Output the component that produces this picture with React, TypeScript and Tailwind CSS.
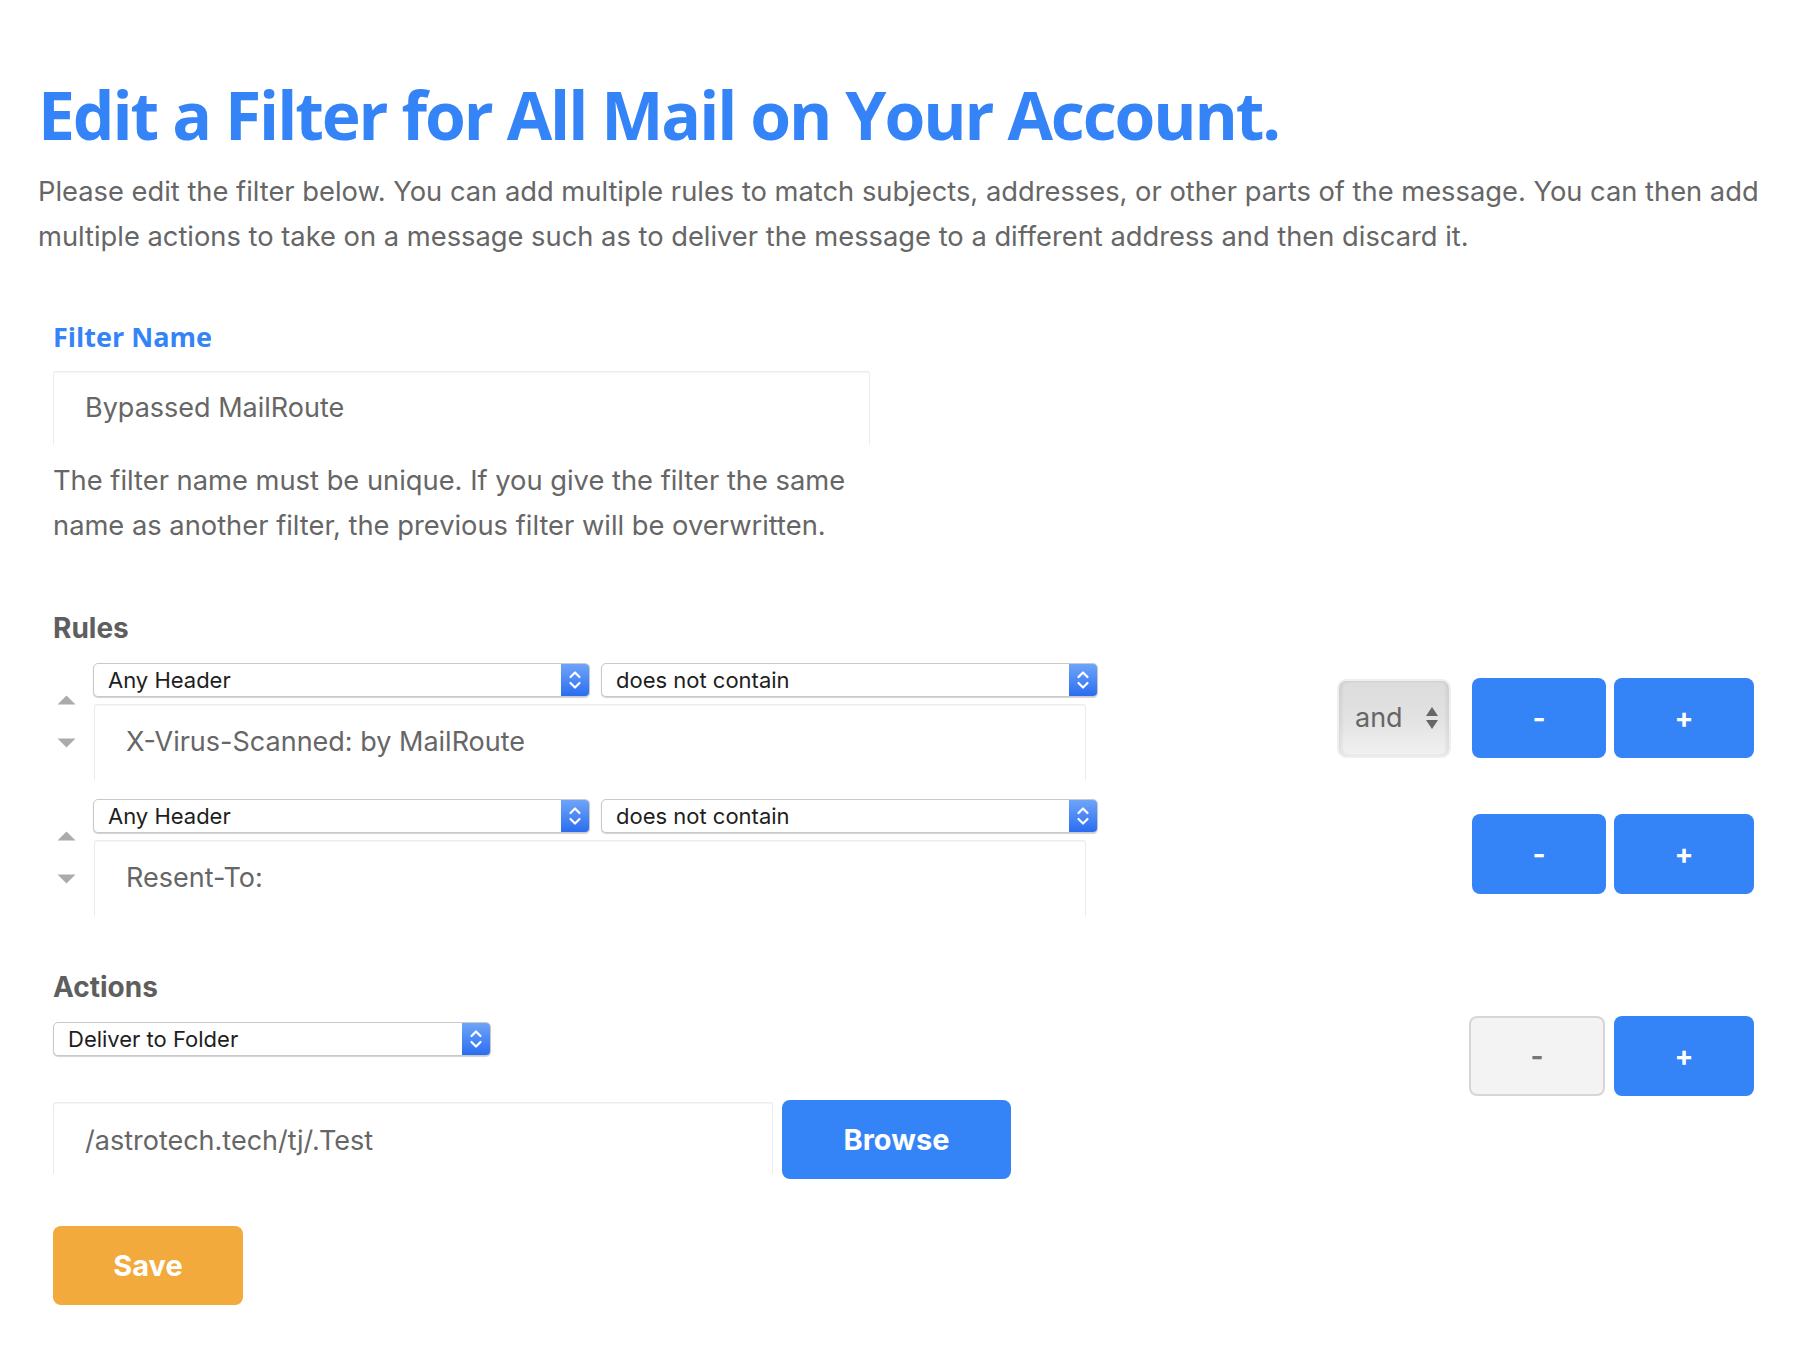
import React from "react";

function Chevrons() {
  return (
    <svg width="14" height="22" viewBox="0 0 14 22" fill="none">
      <path d="M2.5 8 L7 3.5 L11.5 8" stroke="white" strokeWidth="2.2" strokeLinecap="round" strokeLinejoin="round" />
      <path d="M2.5 14 L7 18.5 L11.5 14" stroke="white" strokeWidth="2.2" strokeLinecap="round" strokeLinejoin="round" />
    </svg>
  );
}

function MacSelect({ label, width }: { label: string; width: string }) {
  return (
    <div
      className={`${width} h-[34px] flex items-stretch rounded-[5px] border border-[#c9c9c9] bg-white shadow-[0_1px_1px_rgba(0,0,0,0.18)] overflow-hidden`}
    >
      <div className="flex-1 flex items-center pl-[14px] text-[22px] text-[#1e1e1e] font-['Inter',sans-serif]">
        {label}
      </div>
      <div className="w-[28px] flex items-center justify-center bg-gradient-to-b from-[#6ea4f8] to-[#2a6cf1]">
        <Chevrons />
      </div>
    </div>
  );
}

function Tri({ up }: { up?: boolean }) {
  return (
    <svg width="19" height="10" viewBox="0 0 19 10">
      {up ? <polygon points="9.5,0.5 18.5,9.5 0.5,9.5" fill="#ababab" /> : <polygon points="0.5,0.5 18.5,0.5 9.5,9.5" fill="#ababab" />}
    </svg>
  );
}

function TextBox({ value, className }: { value: string; className: string }) {
  return (
    <div
      className={`${className} flex items-center pl-[31px] border-t border-x border-[#ececec] rounded-t-[3px] shadow-[inset_0_1px_1px_rgba(0,0,0,0.04)] text-[27px] text-[#666] font-['Inter',sans-serif]`}
    >
      {value}
    </div>
  );
}

function BlueBtn({ children, w }: { children: React.ReactNode; w: string }) {
  return (
    <div className={`${w} h-[80px] rounded-[8px] bg-[#3584f7] flex items-center justify-center text-white text-[28px] font-bold font-['Inter',sans-serif]`}>
      {children}
    </div>
  );
}

function RuleRow({ value, showAnd }: { value: string; showAnd?: boolean }) {
  return (
    <div className="flex items-start">
      <div className="w-[40px] self-center flex flex-col items-start pl-[4px] gap-[33px]">
        <Tri up />
        <Tri />
      </div>
      <div className="flex flex-col">
        <div className="flex gap-[11px]">
          <MacSelect label="Any Header" width="w-[497px]" />
          <MacSelect label="does not contain" width="w-[497px]" />
        </div>
        <TextBox value={value} className="mt-[7px] ml-[1px] w-[992px] h-[76px]" />
      </div>
      <div className="flex-1 mt-[15px] flex justify-end items-center">
        {showAnd && (
          <div className="mr-[21px] w-[114px] h-[79px] rounded-[9px] border-2 border-[#efefef] bg-gradient-to-b from-[#dcdcdc] via-[#e2e2e2] to-[#f1f1f1] shadow-[inset_3px_0_3px_rgba(0,0,0,0.06),inset_-3px_0_3px_rgba(0,0,0,0.06)] flex items-center pl-[16px] pr-[10px] justify-between">
            <span className="text-[27px] text-[#666] font-['Inter',sans-serif]">and</span>
            <svg width="14" height="24" viewBox="0 0 14 24">
              <polygon points="7,1 13,10 1,10" fill="#666" />
              <polygon points="1,14 13,14 7,23" fill="#666" />
            </svg>
          </div>
        )}
        <div className="flex gap-[8px]">
          <BlueBtn w="w-[134px]">-</BlueBtn>
          <BlueBtn w="w-[140px]">+</BlueBtn>
        </div>
      </div>
    </div>
  );
}

export default function App() {
  return (
    <div className="min-h-screen bg-white font-['Inter',sans-serif]">
      <div className="pl-[38px] pr-[30px] pt-[81px]">
        <h1 className="text-[66px] leading-[66px] font-bold text-[#3584f7] font-['Open_Sans',sans-serif] tracking-[-2.1px]">
          Edit a Filter for All Mail on Your Account.
        </h1>
        <p className="mt-[22px] text-[27.3px] leading-[45px] text-[#666]">
          Please edit the filter below. You can add multiple rules to match subjects, addresses, or other parts of the message. You can then add multiple actions to take on a message such as to deliver the message to a different address and then discard it.
        </p>
      </div>

      <div className="pl-[53px] pr-[42px]">
        <div className="mt-[58px] h-[40px] flex items-center text-[27px] font-bold text-[#3584f7] font-['Open_Sans',sans-serif]">
          Filter Name
        </div>
        <TextBox value="Bypassed MailRoute" className="mt-[14px] w-[817px] h-[74px]" />
        <p className="mt-[13px] w-[830px] text-[27.3px] leading-[45px] text-[#666]">
          The filter name must be unique. If you give the filter the same name as another filter, the previous filter will be overwritten.
        </p>

        <div className="mt-[60px] h-[40px] flex items-center text-[28px] font-bold text-[#5e5e5e]">Rules</div>
        <div className="mt-[15px] flex flex-col gap-[19px]">
          <RuleRow value="X-Virus-Scanned: by MailRoute" showAnd />
          <RuleRow value="Resent-To:" />
        </div>

        <div className="mt-[51px] h-[40px] flex items-center text-[28px] font-bold text-[#5e5e5e]">Actions</div>
        <div className="mt-[9px] flex justify-between items-start">
          <div className="flex flex-col">
            <div className="mt-[6px]">
              <MacSelect label="Deliver to Folder" width="w-[438px]" />
            </div>
            <div className="mt-[44px] flex items-start gap-[9px]">
              <TextBox value="/astrotech.tech/tj/.Test" className="mt-[2px] pt-[6px] w-[720px] h-[72px]" />
              <div className="w-[229px] h-[79px] rounded-[8px] bg-[#3584f7] flex items-center justify-center text-white text-[29px] font-bold">
                Browse
              </div>
            </div>
          </div>
          <div className="flex gap-[9px]">
            <div className="w-[136px] h-[80px] rounded-[8px] border-2 border-[#d6d6d6] bg-[#f3f3f3] flex items-center justify-center text-[#777] text-[28px] font-bold">
              -
            </div>
            <BlueBtn w="w-[140px]">+</BlueBtn>
          </div>
        </div>

        <div className="mt-[47px] w-[190px] h-[79px] rounded-[8px] bg-[#f2aa3c] flex items-center justify-center text-white text-[29px] font-bold">
          Save
        </div>
        <div className="h-[57px]" />
      </div>
    </div>
  );
}
